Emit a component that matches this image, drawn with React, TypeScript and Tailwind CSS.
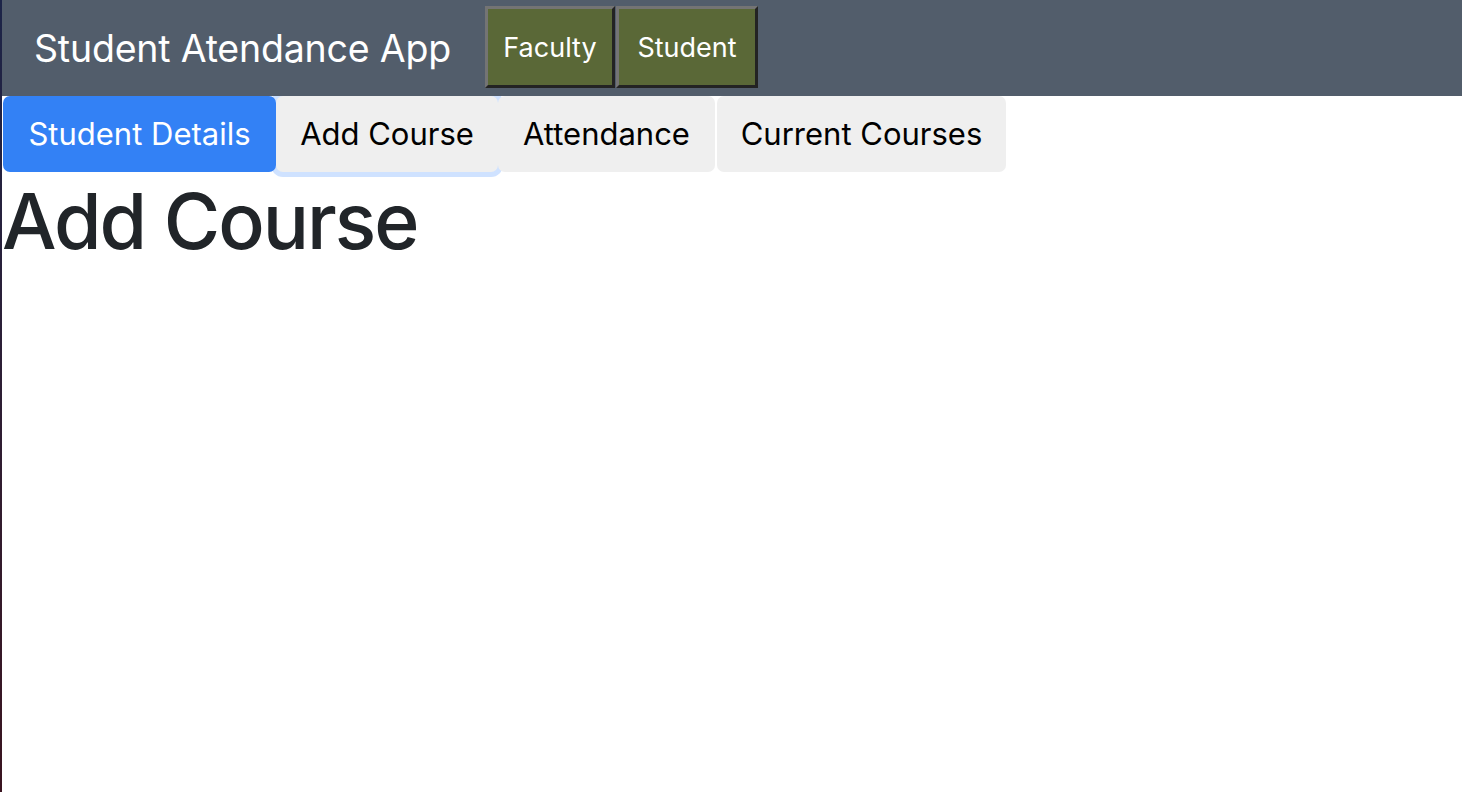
import React from "react";

export default function App() {
  const font = { fontFamily: "Inter, 'Noto Sans', sans-serif" };
  return (
    <div className="flex min-h-[792px] w-full bg-white" style={font}>
      <div className="w-[2px] shrink-0 bg-gradient-to-b from-[#1c2448] to-[#3a1420]" />
      <div className="flex-1 flex flex-col">
        <header className="relative z-20 h-[96px] bg-[#525d6b] flex items-center pl-[32px]">
          <span className="text-[37.5px] text-white tracking-[-0.2px] mr-[34px] leading-none mt-[2px]">
            Student Atendance App
          </span>
          <div className="flex items-center h-[82px] mt-[-2px]">
            <button className="h-[82px] w-[130px] bg-[#5a6837] text-white text-[27px] pt-[2px] border-[3px] border-t-[#747474] border-l-[#747474] border-b-[#232323] border-r-[#232323]">
              Faculty
            </button>
            <button className="ml-[1px] h-[82px] w-[142px] bg-[#5a6837] text-white text-[27px] pt-[2px] border-[3px] border-t-[#747474] border-l-[#747474] border-b-[#232323] border-r-[#232323]">
              Student
            </button>
          </div>
        </header>
        <div className="flex h-[76px] pl-[1px]">
          <button className="relative z-10 w-[273px] h-[76px] rounded-[7px] bg-[#3381f5] text-white text-[31px]">
            Student Details
          </button>
          <button className="relative z-0 w-[222px] h-[76px] rounded-[7px] bg-[#efefef] text-black text-[31px] shadow-[0_0_0_5px_#cfe2ff]">
            Add Course
          </button>
          <button className="relative z-10 w-[217px] h-[76px] rounded-[7px] bg-[#efefef] text-black text-[31px]">
            Attendance
          </button>
          <button className="relative z-10 ml-[2px] w-[289px] h-[76px] rounded-[7px] bg-[#efefef] text-black text-[31px]">
            Current Courses
          </button>
        </div>
        <h1 className="mt-[3px] text-[77px] leading-[1.2] font-medium text-[#212529] tracking-[-2px]">
          Add Course
        </h1>
      </div>
    </div>
  );
}
